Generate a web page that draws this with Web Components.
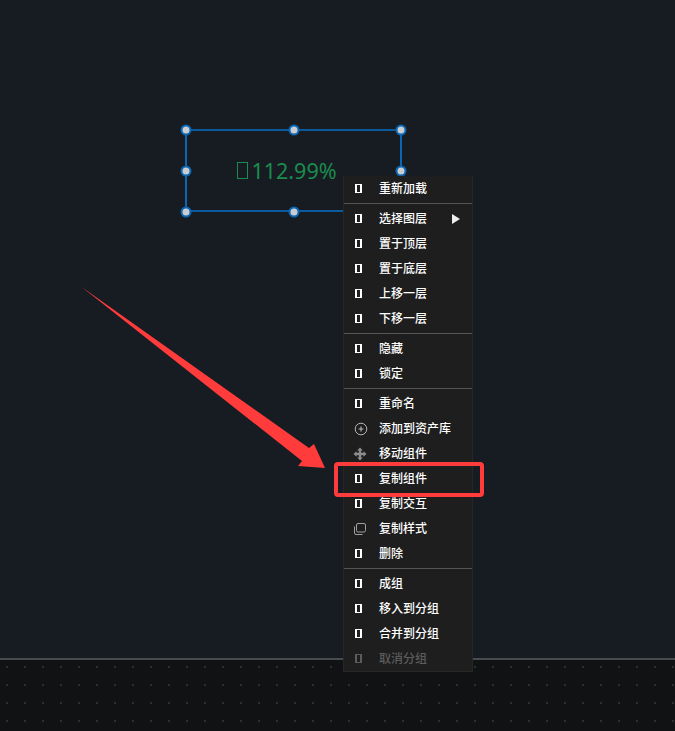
<!DOCTYPE html>
<html>
<head>
<meta charset="utf-8">
<title>context menu</title>
<style>
    html, body { margin: 0; padding: 0; height: 100%; background: #171c23; overflow: hidden; }
    body { font-family: "Noto Sans CJK SC", "Noto Sans", sans-serif; }
</style>
</head>
<body>
<editor-stage>
    <canvas-widget slot="canvas" value="112.99%"></canvas-widget>
    <red-arrow slot="canvas"></red-arrow>
    <context-menu slot="canvas">
        <menu-item>重新加载</menu-item>
        <menu-sep></menu-sep>
        <menu-item arrow>选择图层</menu-item>
        <menu-item>置于顶层</menu-item>
        <menu-item>置于底层</menu-item>
        <menu-item>上移一层</menu-item>
        <menu-item>下移一层</menu-item>
        <menu-sep></menu-sep>
        <menu-item>隐藏</menu-item>
        <menu-item>锁定</menu-item>
        <menu-sep></menu-sep>
        <menu-item>重命名</menu-item>
        <menu-item icon="add">添加到资产库</menu-item>
        <menu-item icon="move">移动组件</menu-item>
        <menu-item>复制组件</menu-item>
        <menu-item>复制交互</menu-item>
        <menu-item icon="copy">复制样式</menu-item>
        <menu-item>删除</menu-item>
        <menu-sep></menu-sep>
        <menu-item>成组</menu-item>
        <menu-item>移入到分组</menu-item>
        <menu-item>合并到分组</menu-item>
        <menu-item disabled>取消分组</menu-item>
    </context-menu>
    <red-frame slot="canvas"></red-frame>
</editor-stage>

<script>
class EditorStage extends HTMLElement {
    constructor() {
        super();
        this.attachShadow({mode: 'open'});
        this.shadowRoot.innerHTML = `
            <style>
                :host { display: flex; flex-direction: column; height: 731px; }
                .canvas { position: relative; flex: 0 0 658px; background: #171c23; }
                .ruler {
                    flex: 1;
                    border-top: 2px solid #484b4e;
                    background-color: #111214;
                    background-image: radial-gradient(circle at 1px 1px, #2c2e31 1.1px, transparent 1.2px);
                    background-size: 18px 18px;
                    background-position: 6px 6px;
                }
            </style>
            <div class="canvas"><slot name="canvas"></slot></div>
            <div class="ruler"></div>
        `;
    }
}

class CanvasWidget extends HTMLElement {
    constructor() {
        super();
        this.attachShadow({mode: 'open'});
        this.shadowRoot.innerHTML = `
            <style>
                :host {
                    position: absolute;
                    left: 185px;
                    top: 129px;
                    width: 213px;
                    height: 79px;
                    border: 2px solid #0b5a9e;
                    border-left-color: #0b66b4;
                    border-right-color: #0b66b4;
                    display: flex;
                    align-items: center;
                    justify-content: center;
                    color: #1b8c4d;
                    font: 21.5px "Noto Sans", "Open Sans", sans-serif;
                }
                .label { margin-right: 13px; display: flex; align-items: center; }
                .tofu {
                    width: 9px;
                    height: 15px;
                    border: 1px solid #1b8c4d;
                    margin-right: 3px;
                }
                i {
                    position: absolute;
                    width: 7px;
                    height: 7px;
                    border: 2px solid #0b66b4;
                    border-radius: 50%;
                    background: #c9ccd0;
                    transform: translate(-50%, -50%);
                }
            </style>
            <span class="label"><span class="tofu"></span><span class="val"></span></span>
            <i style="left:-1px;top:-1.5px"></i>
            <i style="left:50%;top:-1.5px"></i>
            <i style="left:214px;top:-1.5px"></i>
            <i style="left:-1px;top:39.5px"></i>
            <i style="left:214px;top:39.5px"></i>
            <i style="left:-1px;top:80.5px"></i>
            <i style="left:50%;top:80.5px"></i>
        `;
    }

    connectedCallback() {
        this.shadowRoot.querySelector('.val').textContent = this.getAttribute('value');
    }
}

class ContextMenu extends HTMLElement {
    constructor() {
        super();
        this.attachShadow({mode: 'open'});
        this.shadowRoot.innerHTML = `
            <style>
                :host {
                    position: absolute;
                    left: 343px;
                    top: 176px;
                    width: 130px;
                    box-sizing: border-box;
                    background: #1e1e1e;
                    border: 1px solid #262626;
                    border-top: 0;
                    display: flex;
                    flex-direction: column;
                }
            </style>
            <slot></slot>
        `;
    }
}

const menuIcons = {
    add: `<svg style="margin-left:10px" width="14" height="14" viewBox="0 0 14 14" fill="none" stroke="#b4b4b4"><circle cx="7" cy="7" r="5.8"/><path d="M4.5 7h5M7 4.5v5" stroke-width="1.2"/></svg>`,
    move: `<svg style="margin-left:9px" width="14" height="14" viewBox="0 0 14 14" fill="#8c8c8c"><path d="M7 .5l2.8 3H8.2v2.3h2.3V4.2L13.5 7l-3 2.8V8.2H8.2v2.3h1.6L7 13.5l-2.8-3h1.6V8.2H3.5v1.6L.5 7l3-2.8v1.6h2.3V3.5H4.2z"/></svg>`,
    copy: `<svg style="margin-left:9px" width="14" height="14" viewBox="0 0 14 14" fill="none" stroke="#a0a0a0"><rect x="3.5" y="1.5" width="9" height="8.5" rx="1.5"/><path d="M1.5 4.5v6.5a1.5 1.5 0 0 0 1.5 1.5h6.5"/></svg>`
};

class MenuItem extends HTMLElement {
    constructor() {
        super();
        this.attachShadow({mode: 'open'});
        this.shadowRoot.innerHTML = `
            <style>
                :host {
                    display: flex;
                    align-items: center;
                    height: 25px;
                    color: #fff;
                    font-size: 12px;
                    font-weight: 500;
                    font-family: "Noto Sans CJK SC", sans-serif;
                    white-space: nowrap;
                }
                :host([disabled]) { color: #5c5c5c; }
                .icon {
                    flex: 0 0 35px;
                    display: flex;
                    align-items: center;
                }
                .tofu {
                    box-sizing: border-box;
                    width: 7px;
                    height: 9px;
                    margin-left: 11px;
                    border: solid currentColor;
                    border-width: 1px 2px;
                }
                .text { margin-bottom: 2px; }
                .arrow {
                    position: absolute;
                    left: 108px;
                    border-left: 8px solid #eee;
                    border-top: 5px solid transparent;
                    border-bottom: 5px solid transparent;
                }
            </style>
            <span class="icon"></span>
            <span class="text"><slot></slot></span>
        `;
    }

    connectedCallback() {
        let box = this.shadowRoot.querySelector('.icon');
        let name = this.getAttribute('icon');
        box.innerHTML = name ? menuIcons[name] : '<span class="tofu"></span>';
        if (this.hasAttribute('arrow')) {
            let a = document.createElement('span');
            a.className = 'arrow';
            this.shadowRoot.appendChild(a);
        }
    }
}

class MenuSep extends HTMLElement {
    constructor() {
        super();
        this.attachShadow({mode: 'open'});
        this.shadowRoot.innerHTML = `
            <style>
                :host { display: block; height: 1px; margin: 2px 0; background: #555; }
            </style>
        `;
    }
}

class RedArrow extends HTMLElement {
    constructor() {
        super();
        this.attachShadow({mode: 'open'});
        this.shadowRoot.innerHTML = `
            <style>
                :host { position: absolute; left: 0; top: 0; }
                svg { display: block; }
            </style>
            <svg width="675" height="658"><polygon fill="#ff3b3b" points="81,286.5 309,448 314,444 325,468 298,466 302,461"/></svg>
        `;
    }
}

class RedFrame extends HTMLElement {
    constructor() {
        super();
        this.attachShadow({mode: 'open'});
        this.shadowRoot.innerHTML = `
            <style>
                :host {
                    position: absolute;
                    left: 334px;
                    top: 462px;
                    width: 150px;
                    height: 35px;
                    box-sizing: border-box;
                    border: 4px solid #ff3b3b;
                    border-radius: 4px;
                }
            </style>
        `;
    }
}

customElements.define('editor-stage', EditorStage);
customElements.define('canvas-widget', CanvasWidget);
customElements.define('context-menu', ContextMenu);
customElements.define('menu-item', MenuItem);
customElements.define('menu-sep', MenuSep);
customElements.define('red-arrow', RedArrow);
customElements.define('red-frame', RedFrame);
</script>
</body>
</html>
